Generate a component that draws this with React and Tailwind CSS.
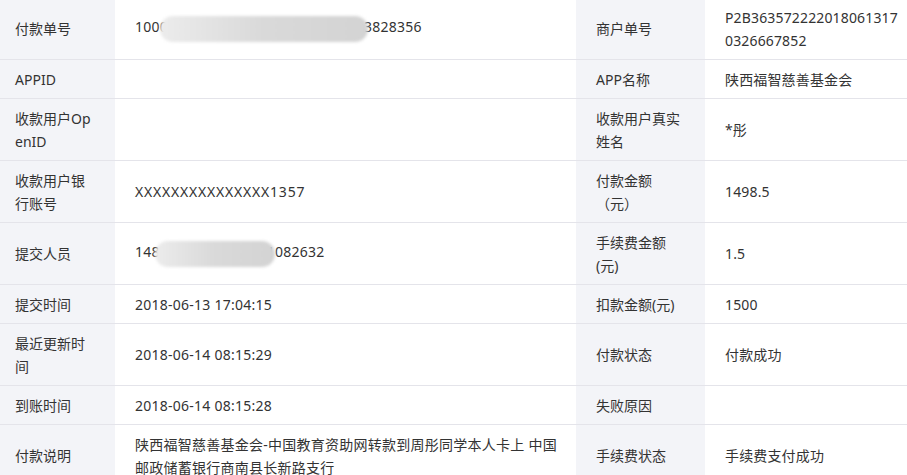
import React from "react";

// blurred redaction blob laid over part of a number
function Smudge({ w }) {
  return (
    <span
      className="relative z-10 inline-block h-[26px] align-middle rounded-full bg-gradient-to-r from-[#ececec] via-[#d9d9d9] to-[#d3d3d3] blur-[1.5px]"
      style={{ width: w }}
    />
  );
}

const rows = [
  [
    "付款单号",
    <span>
      1000<span className="-ml-[8px] -mr-[4px]"><Smudge w={208} /></span>3828356
    </span>,
    "商户单号",
    "P2B3635722220180613170326667852",
  ],
  ["APPID", "", "APP名称", "陕西福智慈善基金会"],
  ["收款用户OpenID", "", "收款用户真实姓名", "*彤"],
  ["收款用户银行账号", <span className="tracking-[0.8px]">XXXXXXXXXXXXXXX1357</span>, "付款金额（元）", "1498.5"],
  [
    "提交人员",
    <span>
      148<span className="-ml-[5px] -mr-[8px]"><Smudge w={120} /></span>1082632
    </span>,
    "手续费金额(元)",
    "1.5",
  ],
  ["提交时间", "2018-06-13 17:04:15", "扣款金额(元)", "1500"],
  ["最近更新时间", "2018-06-14 08:15:29", "付款状态", "付款成功"],
  ["到账时间", "2018-06-14 08:15:28", "失败原因", ""],
  [
    "付款说明",
    "陕西福智慈善基金会-中国教育资助网转款到周彤同学本人卡上 中国邮政储蓄银行商南县长新路支行",
    "手续费状态",
    "手续费支付成功",
  ],
];

export default function App() {
  const cell = "flex items-center border-b border-[#e4e4ea] py-[7.5px]";
  return (
    <div className="w-[907px] h-[475px] overflow-hidden bg-white font-['Noto_Sans','Noto_Sans_CJK_SC',sans-serif] text-[14px] leading-[23px] text-[#333]">
      <div className="-mt-[2px] grid grid-cols-[115px_461px_129px_202px]">
        {rows.map(([l1, v1, l2, v2], i) => (
          <React.Fragment key={i}>
            <div className={`${cell} bg-[#f3f4f8] pl-[15px] pr-[20px] break-all`}>{l1}</div>
            <div className={`${cell} pl-[20px] pr-[12px] tracking-[0.25px]`}>
              <div className="w-full">{v1}</div>
            </div>
            <div className={`${cell} bg-[#f3f4f8] pl-[20px] pr-[21px]`}>{l2}</div>
            <div className={`${cell} pl-[20px] pr-[6px] break-all tracking-[0.15px]`}>{v2}</div>
          </React.Fragment>
        ))}
      </div>
    </div>
  );
}
